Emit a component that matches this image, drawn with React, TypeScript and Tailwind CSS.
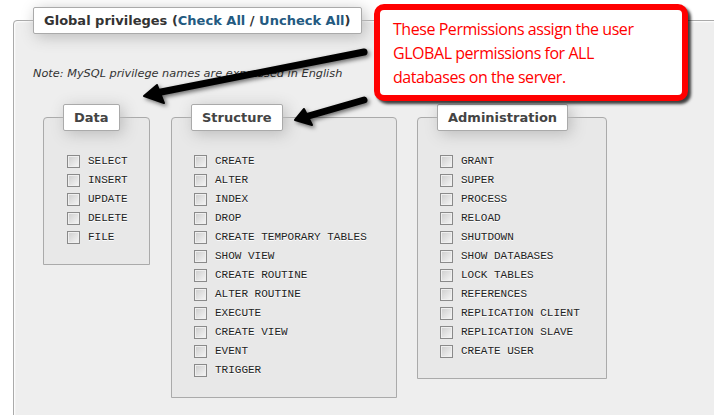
import React from "react";

const dataPrivs = ["SELECT", "INSERT", "UPDATE", "DELETE", "FILE"];
const structurePrivs = [
  "CREATE",
  "ALTER",
  "INDEX",
  "DROP",
  "CREATE TEMPORARY TABLES",
  "SHOW VIEW",
  "CREATE ROUTINE",
  "ALTER ROUTINE",
  "EXECUTE",
  "CREATE VIEW",
  "EVENT",
  "TRIGGER",
];
const adminPrivs = [
  "GRANT",
  "SUPER",
  "PROCESS",
  "RELOAD",
  "SHUTDOWN",
  "SHOW DATABASES",
  "LOCK TABLES",
  "REFERENCES",
  "REPLICATION CLIENT",
  "REPLICATION SLAVE",
  "CREATE USER",
];

function CheckRow({ label }: { label: string }) {
  return (
    <label className="flex h-[19px] items-center">
      <span className="block h-[13px] w-[13px] shrink-0 border border-[#8a8a8a] bg-linear-to-br from-[#cdcdcd] to-[#f6f6f6] shadow-[inset_0_0_0_1px_#efefef]" />
      <span className="ml-[8px] font-['Liberation_Mono',monospace] text-[11px] leading-none text-[#222] [text-shadow:0_1px_0_#fff]">
        {label}
      </span>
    </label>
  );
}

function Group({
  title,
  items,
  widthClass,
  indentClass,
}: {
  title: string;
  items: string[];
  widthClass: string;
  indentClass: string;
}) {
  return (
    <fieldset
      className={`${widthClass} shrink-0 rounded-t-[4px] border border-[#aaa] bg-[#e8e8e8] pb-[17px] pl-[19px]`}
    >
      <legend className="rounded-[2px] border border-[#aaa] bg-white px-[10px] py-[5px] text-[13px] leading-[15px] font-bold text-[#444] shadow-[3px_3px_15px_#bbb]">
        {title}
      </legend>
      <div className={`pt-[21px] ${indentClass}`}>
        {items.map((p) => (
          <CheckRow key={p} label={p} />
        ))}
      </div>
    </fieldset>
  );
}

export default function App() {
  return (
    <div className="relative h-[415px] w-[714px] overflow-hidden bg-white font-['DejaVu_Sans',sans-serif]">
      <fieldset className="ml-[13px] mt-[7px] h-[440px] w-[780px] rounded-tl-[4px] border border-[#aaa] bg-[#eee] pl-[19px] shadow-[inset_1px_1px_2px_#fff]">
        <legend className="rounded-[2px] border border-[#aaa] bg-white px-[10px] py-[5px] text-[13px] leading-[15px] font-bold text-[#333] shadow-[3px_3px_15px_#bbb]">
          Global privileges (
          <a href="#" className="text-[#235a81]">
            Check All
          </a>{" "}
          /{" "}
          <a href="#" className="text-[#235a81]">
            Uncheck All
          </a>
          )
        </legend>

        <p className="mt-[33px] text-[11.3px] leading-[13px] italic text-[#333]">
          Note: MySQL privilege names are expressed in English
        </p>

        <div className="ml-[10px] mt-[24px] flex items-start">
          <Group title="Data" items={dataPrivs} widthClass="w-[107px]" indentClass="pl-[4px]" />
          <div className="ml-[21px]">
            <Group title="Structure" items={structurePrivs} widthClass="w-[226px]" indentClass="pl-[3px]" />
          </div>
          <div className="ml-[20px]">
            <Group title="Administration" items={adminPrivs} widthClass="w-[190px]" indentClass="pl-[3px]" />
          </div>
        </div>
      </fieldset>

      {/* annotation callout */}
      <div className="absolute left-[374px] top-[4px] h-[97px] w-[314px] rounded-[10px] border-[6px] border-[#ff0000] bg-white pl-[13px] pt-[7px] font-['Open_Sans',sans-serif] text-[16px] leading-[24px] tracking-[-0.45px] text-[#ff0000] shadow-[3px_3px_3px_rgba(0,0,0,0.75)]">
        These Permissions assign the user
        <br />
        GLOBAL permissions for ALL
        <br />
        databases on the server.
      </div>

      {/* pointer arrows */}
      <svg
        className="pointer-events-none absolute left-0 top-0"
        width="714"
        height="415"
        viewBox="0 0 714 415"
      >
        <defs>
          <filter id="arrowShadow" x="-20%" y="-50%" width="140%" height="200%">
            <feDropShadow dx="2" dy="2" stdDeviation="2" floodColor="#000" floodOpacity="0.55" />
          </filter>
        </defs>
        <g filter="url(#arrowShadow)" fill="#000" stroke="#000" strokeLinecap="round" strokeLinejoin="round">
          <path d="M364 52 L156 93" strokeWidth="7" fill="none" />
          <polygon points="144,96 157,85 164,103" strokeWidth="2" />
          <path d="M364 100 L305 117" strokeWidth="7" fill="none" />
          <polygon points="295,120 304,109 312,125" strokeWidth="2" />
        </g>
      </svg>
    </div>
  );
}
